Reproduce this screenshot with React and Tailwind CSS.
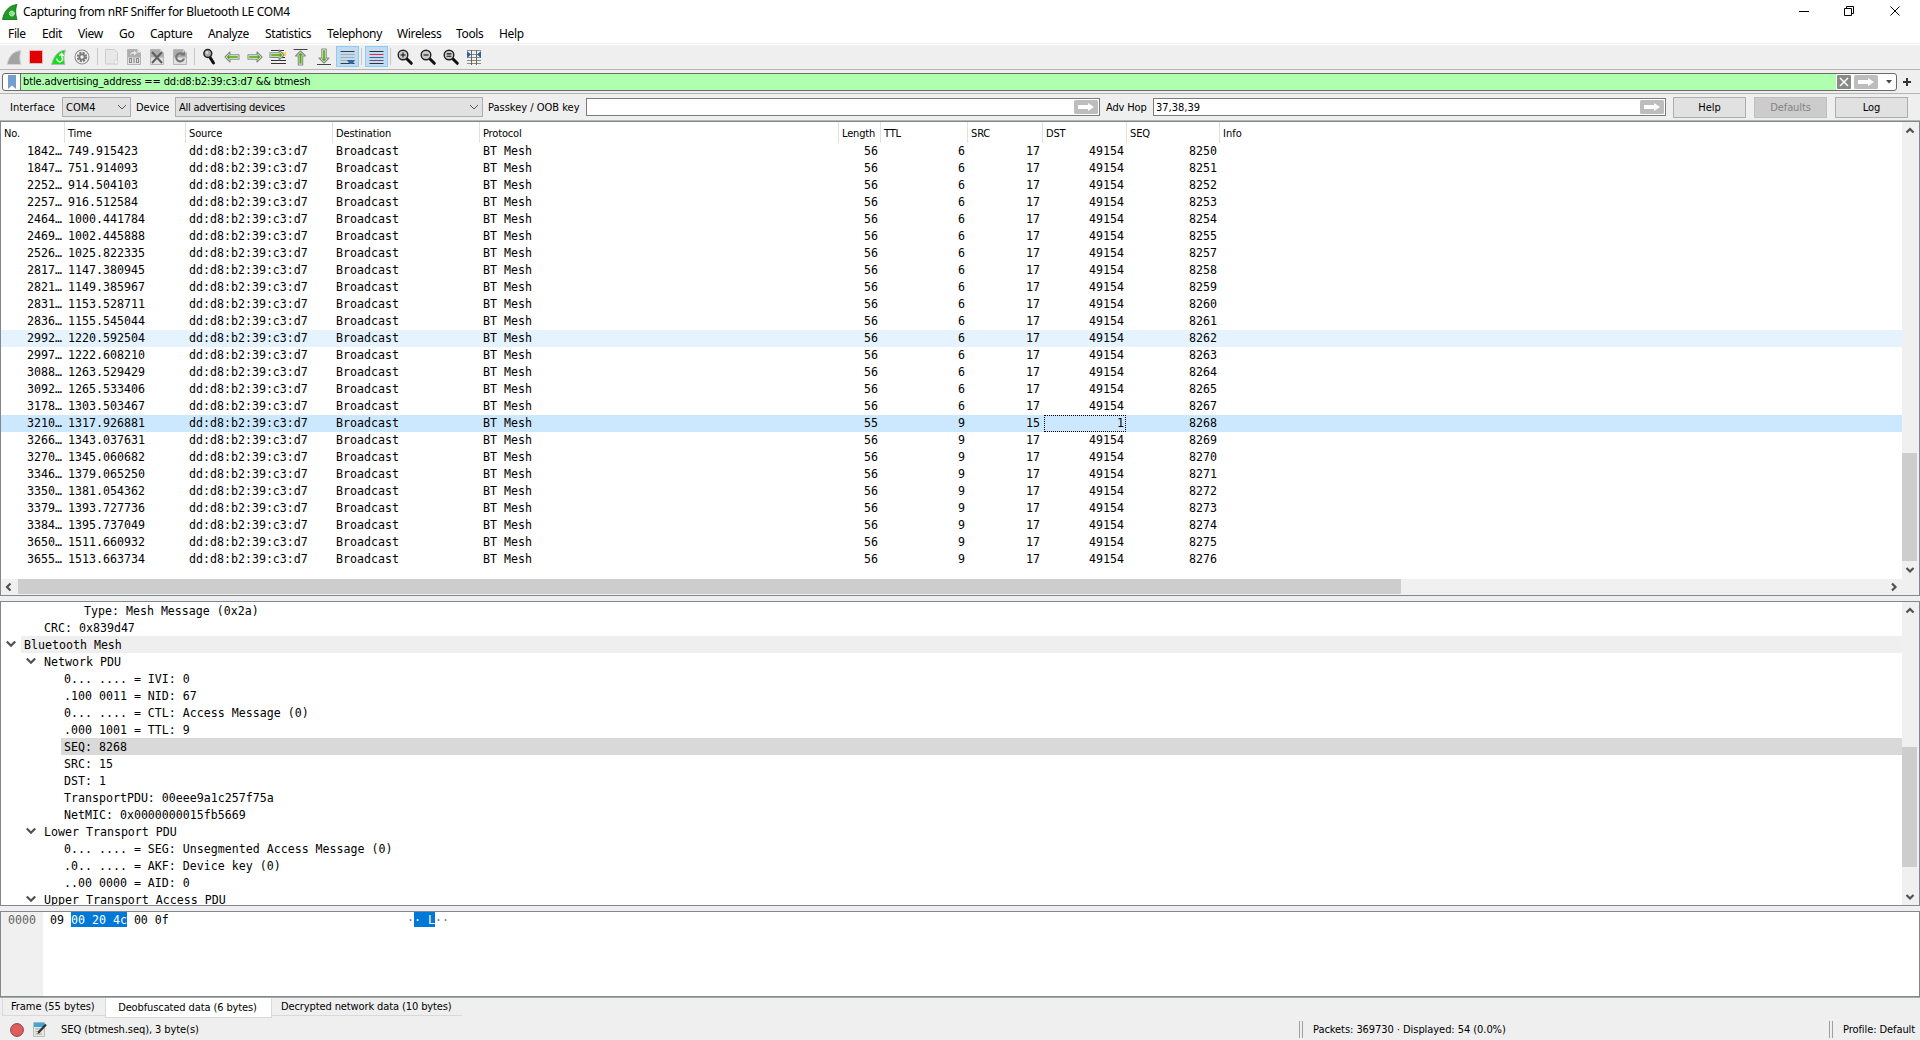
import React from 'react';

const MONO = "font-['DejaVu_Sans_Mono',monospace] text-[11.627px] whitespace-pre";

const MENU = [
  ['File', 'w-[34px]'], ['Edit', 'w-[36px]'], ['View', 'w-[41px]'], ['Go', 'w-[31px]'],
  ['Capture', 'w-[58px]'], ['Analyze', 'w-[57px]'], ['Statistics', 'w-[62px]'],
  ['Telephony', 'w-[70px]'], ['Wireless', 'w-[59px]'], ['Tools', 'w-[43px]'], ['Help', 'w-[40px]'],
];

const COLS = [
  ['No.', 'w-[64px]', true], ['Time', 'w-[121px]'], ['Source', 'w-[147px]'], ['Destination', 'w-[147px]'],
  ['Protocol', 'w-[359px]'], ['Length', 'w-[42px]', true], ['TTL', 'w-[87px]', true],
  ['SRC', 'w-[75px]', true], ['DST', 'w-[84px]', true], ['SEQ', 'w-[93px]', true],
];

const PACKETS = [
  ['1842', '749.915423', 8250], ['1847', '751.914093', 8251], ['2252', '914.504103', 8252],
  ['2257', '916.512584', 8253], ['2464', '1000.441784', 8254], ['2469', '1002.445888', 8255],
  ['2526', '1025.822335', 8257], ['2817', '1147.380945', 8258], ['2821', '1149.385967', 8259],
  ['2831', '1153.528711', 8260], ['2836', '1155.545044', 8261], ['2992', '1220.592504', 8262],
  ['2997', '1222.608210', 8263], ['3088', '1263.529429', 8264], ['3092', '1265.533406', 8265],
  ['3178', '1303.503467', 8267], ['3210', '1317.926881', 8268], ['3266', '1343.037631', 8269],
  ['3270', '1345.060682', 8270], ['3346', '1379.065250', 8271], ['3350', '1381.054362', 8272],
  ['3379', '1393.727736', 8273], ['3384', '1395.737049', 8274], ['3650', '1511.660932', 8275],
  ['3655', '1513.663734', 8276],
];

const TREE = [
  [3, 'Type: Mesh Message (0x2a)'], [1, 'CRC: 0x839d47'],
  [0, 'Bluetooth Mesh', true, 'bg-[#efefef]'], [1, 'Network PDU', true],
  [2, '0... .... = IVI: 0'], [2, '.100 0011 = NID: 67'],
  [2, '0... .... = CTL: Access Message (0)'], [2, '.000 1001 = TTL: 9'],
  [2, 'SEQ: 8268', false, 'bg-[#d9d9d9]'], [2, 'SRC: 15'], [2, 'DST: 1'],
  [2, 'TransportPDU: 00eee9a1c257f75a'], [2, 'NetMIC: 0x0000000015fb5669'],
  [1, 'Lower Transport PDU', true],
  [2, '0... .... = SEG: Unsegmented Access Message (0)'],
  [2, '.0.. .... = AKF: Device key (0)'], [2, '..00 0000 = AID: 0'],
  [1, 'Upper Transport Access PDU', true],
];
const INDENT = ['w-0', 'w-[20px]', 'w-[40px]', 'w-[60px]'];

function Chevron({ dir, className = '' }) {
  const d = {
    up: 'M1.500 6.500 5 3l3.500 3.500', down: 'M1.500 3 5 6.500 8.500 3',
    open: 'M.8 2.500 5 6.700 9.200 2.500',
    left: 'M6.500 1.500 3 5l3.500 3.500', right: 'M3 1.500 6.500 5 3 8.500',
  }[dir];
  return (
    <svg viewBox="0 0 10 10" className={`size-[10px] shrink-0 ${className}`}>
      <path d={d} fill="none" stroke="#505050" strokeWidth="2.200" />
    </svg>
  );
}

function Icon({ children, checked }) {
  return (
    <div className={`h-[21px] w-[23px] shrink-0 ${checked ? 'bg-[#c0dcf3] outline-1 -outline-offset-1 outline-[#90c8f6]' : ''}`}>
      <svg viewBox="0 0 23 21" className="h-[21px] w-[23px]">{children}</svg>
    </div>
  );
}

function Sep({ className = 'w-[6px]' }) {
  return <div className={`flex h-[17px] shrink-0 pl-[2px] ${className}`}><div className="w-px bg-[#c8c8c8]" /></div>;
}

function Lens({ children }) {
  return (
    <>
      <path d="M12.500 12.500l4.800 4.800" stroke="#111" strokeWidth="3" strokeLinecap="round" />
      <circle cx="9" cy="9" r="4.800" fill="#c9c9c9" stroke="#222" strokeWidth="1.400" />
      <path d={children} stroke="#111" strokeWidth="1.100" fill="none" />
    </>
  );
}

function Doc({ children }) {
  return (
    <>
      <path d="M4.500 3.500h10l3 3v12h-13z" fill="#e2e2e2" stroke="#b5b5b5" />
      <path d="M5 4h9l3 3v4.500H5z" fill="#adadad" />
      <path d="M14.500 3.500v3h3" fill="#eee" stroke="#d0d0d0" strokeWidth=".8" />
      {children}
    </>
  );
}

function Arrow({ rotate = 0, x = 0, y = 0 }) {
  return (
    <g transform={`translate(${x} ${y}) rotate(${rotate} 11 11)`}>
      <path d="M4 11 9 6v2.800h9v4.400H9V16z" fill="#fafafa" stroke="#8a8a8a" strokeWidth="1.100" strokeLinejoin="round" />
      <path d="M5.800 11 8.200 8.700v1.500H16.500v1.600H8.200v1.500z" fill="#4fae10" stroke="#4fae10" strokeWidth=".5" />
    </g>
  );
}

function Toolbar() {
  return (
    <div className="flex h-[25px] shrink-0 items-center border-b border-[#b4b4b4] pb-[2px] pl-[3px]">
      <Icon>
        <path d="M4 18.500C6 10 10 5 18 4.500c-1.500 4.500-1.500 9.500 0 14z" fill="#a3a3a3" stroke="#d4d4d4" />
      </Icon>
      <Icon><rect x="3.500" y="4.500" width="13" height="13" fill="#e10000" stroke="#f3b5b5" /></Icon>
      <Icon>
        <path d="M2.500 18.500C5 10 8.500 5 16.500 4c-2 5-2 9.500-.5 14.500z" fill="#17dc1c" stroke="#b8b8b8" />
        <path d="M8 12.500a2.800 2.800 0 1 0 4.800-1.500V8M10.300 9.800 12.600 7.500l2 2.300" fill="none" stroke="#fff" strokeWidth="1.400" />
      </Icon>
      <Icon>
        <circle cx="10" cy="11" r="7" fill="#f4f4f4" stroke="#8d8d8d" strokeWidth="1.100" />
        <circle cx="10" cy="11" r="4.200" fill="none" stroke="#7c7c7c" strokeWidth="2" strokeDasharray="2.200 1.100" />
        <circle cx="10" cy="11" r="3.600" fill="#7c7c7c" />
        <circle cx="10" cy="11" r="1.700" fill="#f4f4f4" />
      </Icon>
      <Sep className="w-[5px]" />
      <Icon>
        <path d="M5.500 3.500h9l3 3v11.500h-12z" fill="#e8e8e8" stroke="#cdcdcd" />
        <path d="M14.500 14v4h3v-4z" fill="#f3f3f3" stroke="#cfcfcf" strokeWidth=".7" />
      </Icon>
      <Icon>
        <Doc>
          <path d="M7 9.500c.5-3 2-4 4-3.500V4.500L14 7l-3 2.500V8C9 7.600 8 8 7 9.500z" fill="#e6e6e6" />
          <path d="M6.500 12.500h2v4h-2zM11 12v5M13.500 12.500h2v4h-2z" fill="none" stroke="#8d8d8d" strokeWidth="1.100" />
        </Doc>
      </Icon>
      <Icon><Doc><path d="M6 6l10 11M16 6 6 17" stroke="#5f5f5f" strokeWidth="2" /></Doc></Icon>
      <Icon>
        <Doc>
          <path d="M14 8.500a4 4 0 1 0 1 4" fill="none" stroke="#777" strokeWidth="2.200" />
          <path d="M11.500 9.500H16V5z" fill="#777" />
        </Doc>
      </Icon>
      <Sep />
      <Icon>
        <path d="M11.500 10.500l4 6.500" stroke="#111" strokeWidth="3" strokeLinecap="round" />
        <circle cx="9.800" cy="7.500" r="3.900" fill="#a9a9a9" stroke="#222" strokeWidth="1.500" />
        <circle cx="9" cy="6.500" r="1.300" fill="#e4e4e4" />
      </Icon>
      <Icon><Arrow /></Icon>
      <Icon><Arrow rotate={180} /></Icon>
      <Icon>
        <path d="M4 4.500h13M4 11.500h14M4 14.500h15M4 17.500h15" stroke="#333" />
        <path d="M13 6h6v4h-6z" fill="#f7dc45" />
        <Arrow rotate={180} x={-1} y={-2} />
      </Icon>
      <Icon>
        <path d="M3.500 3.500h14" stroke="#444" />
        <Arrow rotate={90} x={-0.5} y={1} />
      </Icon>
      <Icon>
        <path d="M4 18.500h14" stroke="#444" />
        <Arrow rotate={270} y={-1} />
      </Icon>
      <Icon checked>
        <path d="M4.500 8.500h14M4.500 11.500h14M4.500 14.500h8" stroke="#a9acae" />
        <path d="M4.500 5.500h14M4.500 17.500h14" stroke="#3a3a3a" />
        <path d="M11 14h8l-2.500 4h-3z" fill="#3465a4" />
      </Icon>
      <Sep />
      <Icon checked>
        <path d="M4.500 5.500h14" stroke="#333" />
        <path d="M4.500 8.500h14" stroke="#ef2929" />
        <path d="M4.500 11.500h14" stroke="#3465a4" />
        <path d="M4.500 14.500h14" stroke="#75507b" />
        <path d="M4.500 17.500h14" stroke="#333" />
      </Icon>
      <Sep />
      <Icon><Lens>M6.500 9h5M9 6.500v5</Lens></Icon>
      <Icon><Lens>M6.500 9h5</Lens></Icon>
      <Icon><Lens>M6.700 7.900h4.600M6.700 10.300h4.600</Lens></Icon>
      <Icon>
        <path d="M4 4.500h14M4 8.500h14M4 11.500h14M4 14.500h14M4 17.500h14" stroke="#8b8b84" />
        <path d="M8.500 4v15M13.500 4v15" stroke="#666" />
        <path d="M4 5 8 8.500 4 12zM18 5 14 8.500l4 3.500z" fill="#2a5fa5" />
      </Icon>
    </div>
  );
}

function GoButton() {
  return (
    <svg viewBox="0 0 24 14" className="h-[14px] w-[24px] shrink-0">
      <rect width="24" height="14" rx="1.500" fill="#bdbdbd" />
      <path d="M4 5h10V3l6 4-6 4V9H4z" fill="#fff" />
    </svg>
  );
}

function FilterBar() {
  return (
    <div className="flex h-[24px] shrink-0 items-start border-b border-[#b4b4b4] pt-[3px] pl-[2px]">
      <div className="flex h-[18px] w-[1895px] items-center overflow-hidden rounded-[3px] border border-[#6a6a6a] bg-white">
        <div className="flex h-full w-[18px] items-center justify-center border-r border-[#6a6a6a]">
          <svg viewBox="0 0 8 14" className="h-[14px] w-[8px]"><path d="M0 0h8v14L4 10.500 0 14z" fill="#729fcf" /></svg>
        </div>
        <div className="flex h-full w-[1815px] items-center bg-[#afffaf] pl-[2px] tracking-[-0.130px]">
          btle.advertising_address == dd:d8:b2:39:c3:d7 &amp;&amp; btmesh
        </div>
        <svg viewBox="0 0 14 14" className="ml-px size-[14px]">
          <rect width="14" height="14" rx="1" fill="#888a85" />
          <path d="M3 3l8 8M11 3l-8 8" stroke="#fff" strokeWidth="1.500" />
        </svg>
        <div className="ml-[3px] flex"><GoButton /></div>
        <svg viewBox="0 0 6 4" className="ml-[8px] h-[4px] w-[6px]"><path d="M0 0h6L3 3.500z" fill="#444" /></svg>
      </div>
      <svg viewBox="0 0 8 8" className="mt-[5px] ml-[6px] size-[8px]"><path d="M4 0v8M0 4h8" stroke="#333" strokeWidth="2" /></svg>
    </div>
  );
}

function Combo({ className, children }) {
  return (
    <div className={`flex h-[20px] items-center justify-between border border-[#adadad] bg-[#e1e1e1] px-[3px] ${className}`}>
      <span>{children}</span>
      <svg viewBox="0 0 10 10" className="size-[10px]"><path d="M1 3l4 4 4-4" fill="none" stroke="#555" /></svg>
    </div>
  );
}

function InterfaceBar() {
  const button = 'flex h-[21px] w-[73px] items-center justify-center border border-[#adadad] bg-[#e1e1e1]';
  return (
    <div className="flex h-[27px] shrink-0 items-start border-b border-[#b4b4b4] pt-[3px] pl-[10px] leading-[21px]">
      <div className="w-[52px] tracking-[0.080px]">Interface</div>
      <Combo className="w-[69px]">COM4</Combo>
      <div className="w-[44px] pl-[5px] tracking-[-0.100px]">Device</div>
      <Combo className="w-[308px] tracking-[-0.250px]">All advertising devices</Combo>
      <div className="w-[103px] pl-[5px]">Passkey / OOB key</div>
      <div className="mt-px flex h-[18px] w-[514px] items-center justify-end border border-[#7a7a7a] bg-white pr-px"><GoButton /></div>
      <div className="w-[53px] pl-[6px] tracking-[-0.150px]">Adv Hop</div>
      <div className="mt-px flex h-[18px] w-[513px] items-center justify-between border border-[#7a7a7a] bg-white pr-px pl-[2px]">
        <span>37,38,39</span><GoButton />
      </div>
      <div className="ml-[7px] flex gap-[8px]">
        <div className={button}>Help</div>
        <div className="flex h-[21px] w-[73px] items-center justify-center border border-[#bfbfbf] bg-[#cccccc] tracking-[-0.100px] text-[#838383]">Defaults</div>
        <div className={button}>Log</div>
      </div>
    </div>
  );
}

function VScroll({ className, thumb }) {
  return (
    <div className={`flex w-[17px] shrink-0 flex-col items-center bg-[#f0f0f0] pr-px ${className}`}>
      <Chevron dir="up" className="mt-[4px] mb-auto" />
      <div className={`w-[15px] self-start bg-[#cdcdcd] ${thumb}`} />
      <Chevron dir="down" />
    </div>
  );
}

function PacketList() {
  return (
    <div className="flex h-[475px] shrink-0 flex-col border border-[#828790] bg-white">
      <div className="flex h-[457px]">
        <div className="w-[1901px]">
          <div className="flex h-[21px]">
            {COLS.map(([name, width]) => (
              <div key={name} className={`shrink-0 border-r border-[#e0e0e0] pl-[3px] leading-[23px] tracking-[-0.150px] ${width}`}>{name}</div>
            ))}
            <div className="pl-[3px] leading-[23px]">Info</div>
          </div>
          {PACKETS.map(([no, time, seq], i) => {
            const selected = seq === 8268;
            const srcDst = selected ? ['15', '1'] : ['17', '49154'];
            const cells = [`${no}…`, time, 'dd:d8:b2:39:c3:d7', 'Broadcast', 'BT Mesh', selected ? '55' : '56', i < 16 ? '6' : '9', ...srcDst, seq];
            const bg = selected ? 'bg-[#cce8ff]' : seq === 8262 ? 'bg-[#e5f3ff]' : '';
            return (
              <div key={no} className={`flex h-[17px] leading-[17px] ${MONO} ${bg}`}>
                {cells.map((cell, c) => (
                  selected && c === 8
                    ? <div key={c} className="mr-px ml-px w-[82px] shrink-0 pr-[2px] text-right outline-1 -outline-offset-1 outline-black outline-dotted">{cell}</div>
                    : <div key={c} className={`shrink-0 ${COLS[c][1]} ${COLS[c][2] ? 'pr-[3px] text-right' : 'pl-[3px]'}`}>{cell}</div>
                ))}
              </div>
            );
          })}
        </div>
        <VScroll thumb="h-[108px] mb-[4px]" className="pb-[4px]" />
      </div>
      <div className="flex h-[16px] items-center bg-[#f0f0f0] pb-px">
        <Chevron dir="left" className="ml-[3px]" />
        <div className="ml-[4px] h-[15px] w-[1383px] bg-[#cdcdcd]" />
        <Chevron dir="right" className="mr-[20px] ml-auto" />
      </div>
    </div>
  );
}

function DetailTree() {
  return (
    <div className="mt-[5px] flex h-[305px] shrink-0 border border-[#828790] bg-white">
      <div className="w-[1901px] overflow-hidden">
        {TREE.map(([depth, text, open, bg = '']) => (
          <div key={text} className={`flex h-[17px] leading-[19px] ${MONO}`}>
            <div className={`shrink-0 ${INDENT[depth]}`} />
            <div className="w-[20px] shrink-0 pt-[3px] pl-[5px]">{open && <Chevron dir="open" />}</div>
            <div className={`grow pl-[3px] ${bg}`}>{text}</div>
          </div>
        ))}
      </div>
      <VScroll thumb="h-[120px] mb-[25px]" className="pb-[3px]" />
    </div>
  );
}

function HexPane() {
  return (
    <div className="mt-[5px] flex h-[86px] shrink-0 border border-[#828790] bg-white">
      <div className={`w-[42px] bg-[#f0f0f0] pl-[7px] leading-[16px] text-[#666] ${MONO}`}>0000</div>
      <div className={`flex h-[15px] pl-[7px] leading-[16px] ${MONO}`}>
        <div className="w-[357px]">09 <span className="inline-block h-[15px] bg-[#0078d7] align-top text-white">00 20 4c</span> 00 0f</div>
        <div className="text-[#777]">·<span className="inline-block h-[15px] bg-[#0078d7] align-top text-white">· L</span>··</div>
      </div>
    </div>
  );
}

export default function App() {
  return (
    <div className="flex h-[1040px] w-[1920px] flex-col overflow-hidden bg-[#efefef] font-['DejaVu_Sans_Condensed','DejaVu_Sans',sans-serif] text-[11px] leading-[14px] whitespace-nowrap text-black">
      <div className="flex h-[24px] shrink-0 items-center bg-white pl-[2px] font-['Noto_Sans',sans-serif] text-[12px]">
        <svg viewBox="0 0 16 16" className="size-[16px]">
          <path d="M.5 15.500C2 7 7 1.500 15 .5c-2 5-1.500 10 0 15z" fill="#1f9a22" stroke="#0d6a15" strokeWidth=".8" />
          <circle cx="9.800" cy="9.500" r="2.500" fill="#8bdc8d" stroke="#e8f8e8" strokeWidth="1" strokeDasharray="1.300 .7" />
        </svg>
        <span className="ml-[5px] tracking-[-0.340px]">Capturing from nRF Sniffer for Bluetooth LE COM4</span>
        <svg viewBox="0 0 102 12" className="mr-[19px] mb-[3px] ml-auto h-[12px] w-[102px]" fill="none" stroke="#000">
          <path d="M0 6.500h10M45.500 3.500h7v7h-7zM47.500 3.500v-2h7v7h-2M91.500 1.500l9 9M100.500 1.500l-9 9" />
        </svg>
      </div>
      <div className="flex h-[20px] shrink-0 items-center border-b border-[#f0f0f0] bg-white pl-[8px] font-['Noto_Sans',sans-serif] text-[12px] tracking-[-0.350px]">
        {MENU.map(([name, width]) => <div key={name} className={`shrink-0 ${width}`}>{name}</div>)}
      </div>
      <div className="h-px shrink-0 bg-white" />
      <Toolbar />
      <FilterBar />
      <InterfaceBar />
      <PacketList />
      <DetailTree />
      <HexPane />
      <div className="flex h-[22px] shrink-0 items-start border-t border-[#a8a8a8] pl-[2px]">
        <div className="flex h-[18px] w-[103px] items-center border-b border-l border-[#d9d9d9] pl-[8px] tracking-[-0.060px]">Frame (55 bytes)</div>
        <div className="flex h-[20px] w-[167px] items-center justify-center border-x border-b border-[#d9d9d9] bg-white pt-px pr-[2px] tracking-[-0.110px]">Deobfuscated data (6 bytes)</div>
        <div className="flex h-[18px] w-[190px] items-center border-b border-[#d9d9d9] pl-[9px] tracking-[-0.110px]">Decrypted network data (10 bytes)</div>
      </div>
      <div className="flex h-[21px] shrink-0 items-center pl-[10px]">
        <svg viewBox="0 0 14 14" className="size-[14px]"><circle cx="7" cy="7" r="6.400" fill="#e25c5c" stroke="#7a4a4a" /></svg>
        <svg viewBox="0 0 14 15" className="ml-[9px] h-[15px] w-[14px]">
          <rect x=".5" y="1" width="11" height="13.500" fill="#e6e6e0" stroke="#aaa" strokeWidth=".7" />
          <rect x="1" y=".5" width="10.500" height="4.500" fill="#47a3d1" />
          <path d="M2.500 7h6M2.500 9.500h4M2.500 12h6.500" stroke="#aaa" />
          <path d="M13 2.500 5.500 10.500" stroke="#2e3436" strokeWidth="2.200" />
          <path d="M5.500 8.800 4.300 12l3-1.200z" fill="#2e3436" />
        </svg>
        <span className="mt-px ml-[14px] w-[1238px] tracking-[-0.080px]">SEQ (btmesh.seq), 3 byte(s)</span>
        <div className="h-[17px] w-[4px] border-x border-[#a0a0a0]" />
        <span className="mt-px ml-[10px] w-[516px] tracking-[-0.060px]">Packets: 369730 · Displayed: 54 (0.0%)</span>
        <div className="h-[17px] w-[4px] border-x border-[#a0a0a0]" />
        <span className="mt-px ml-[10px] tracking-[-0.080px]">Profile: Default</span>
      </div>
    </div>
  );
}
